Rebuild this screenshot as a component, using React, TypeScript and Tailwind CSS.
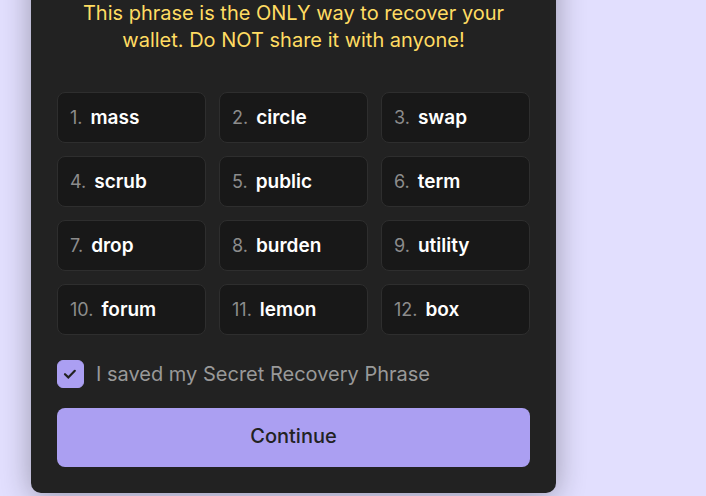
import { useState } from "react";

const words = [
  "mass", "circle", "swap",
  "scrub", "public", "term",
  "drop", "burden", "utility",
  "forum", "lemon", "box",
];

function Word({ index, word }: { index: number; word: string }) {
  return (
    <li className="flex h-[51px] items-center gap-2 rounded-lg border border-[#2e2e2e] bg-[#181818] px-3">
      <span className="text-[18px] leading-6 text-[#8c8c8c]">{index}.</span>
      <span className="text-[19px] leading-6 font-semibold text-white">{word}</span>
    </li>
  );
}

export default function App() {
  const [saved, setSaved] = useState(true);

  return (
    <main className="min-h-screen overflow-hidden bg-[#e2dffe] pr-[150px] pl-[31px] font-['Inter',sans-serif]">
      <section className="-mt-12 w-full max-w-[525px] rounded-[10px] bg-[#222222] px-[26px] pt-12 pb-[26px] shadow-[0_4px_30px_rgba(0,0,0,0.32)]">
        <p className="text-center text-[20px] leading-[27px] text-[#ffdc62]">
          This phrase is the ONLY way to recover your wallet. Do NOT share it with anyone!
        </p>
        <ol className="mt-[38px] grid grid-cols-3 gap-[13px]">
          {words.map((word, i) => (
            <Word key={word} index={i + 1} word={word} />
          ))}
        </ol>
        <label className="mt-[25px] flex items-center gap-3 text-[20px] leading-7 text-[#999999]">
          <span className="grid">
            <input
              type="checkbox"
              checked={saved}
              onChange={(e) => setSaved(e.target.checked)}
              className="peer col-start-1 row-start-1 h-7 w-[27px] appearance-none rounded-md border border-[#ab9ff2] checked:bg-[#ab9ff2]"
            />
            <svg
              viewBox="0 0 27 28"
              aria-hidden="true"
              className="pointer-events-none invisible col-start-1 row-start-1 h-7 w-[27px] peer-checked:visible"
            >
              <path d="M8 14.2l3.3 3.2 6.5-6.6" fill="none" stroke="#222222" strokeWidth="2.2" strokeLinejoin="miter" strokeLinecap="round" />
            </svg>
          </span>
          I saved my Secret Recovery Phrase
        </label>
        <button type="button" className="mt-5 h-[59px] w-full rounded-lg bg-[#ab9ff2] pb-1 text-[20px] leading-7 font-medium text-[#222222]">
          Continue
        </button>
      </section>
    </main>
  );
}
